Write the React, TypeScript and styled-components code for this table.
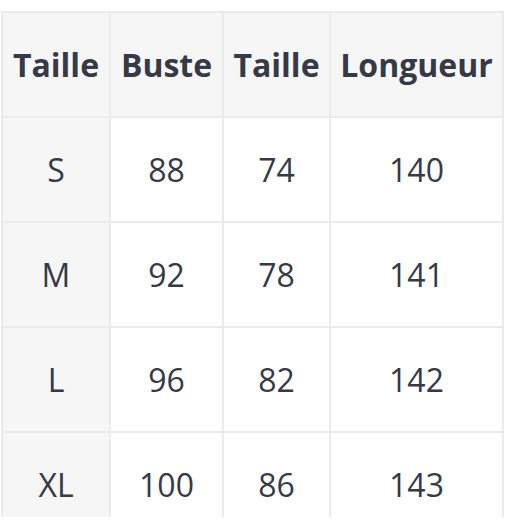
import React, { FC } from "react";
import styled, { createGlobalStyle } from "styled-components";

const GlobalStyle = createGlobalStyle`
  html, body {
    margin: 0;
    padding: 0;
    background: #fff;
  }
  body {
    font-family: "Open Sans", "Liberation Sans", sans-serif;
  }
`;

export const Frame = styled.div`
  padding: 11px 0 0 1px;
  height: 506px;
  overflow: hidden;
`;

export const SizeTable = styled.table`
  border-collapse: separate;
  border-spacing: 0;
  table-layout: fixed;
  width: 503px;
  border-top: 2px solid #ebebeb;
  border-left: 2px solid #ebebeb;
  color: #363a46;
  font-size: 32px;
`;

export const HeadCell = styled.th<{ w: number }>`
  width: ${(p) => p.w}px;
  height: 103px;
  box-sizing: content-box;
  padding: 0;
  background: #f6f6f6;
  border-right: 2px solid #ebebeb;
  border-bottom: 2px solid #ebebeb;
  font-weight: 700;
  text-align: center;
  vertical-align: middle;
  white-space: nowrap;
`;

export const Cell = styled.td<{ shaded?: boolean }>`
  height: 103px;
  padding: 0;
  background: ${(p) => (p.shaded ? "#f6f6f6" : "#fff")};
  border-right: 2px solid #ebebeb;
  border-bottom: 2px solid #ebebeb;
  font-weight: 400;
  text-align: center;
  vertical-align: middle;
`;

interface IRow {
  size: string;
  buste: number;
  taille: number;
  longueur: number;
}

const columns = [
  { title: "Taille", w: 106 },
  { title: "Buste", w: 111 },
  { title: "Taille", w: 105 },
  { title: "Longueur", w: 171 },
];

const rows: IRow[] = [
  { size: "S", buste: 88, taille: 74, longueur: 140 },
  { size: "M", buste: 92, taille: 78, longueur: 141 },
  { size: "L", buste: 96, taille: 82, longueur: 142 },
  { size: "XL", buste: 100, taille: 86, longueur: 143 },
];

const App: FC = () => {
  return (
    <>
      <GlobalStyle />
      <Frame>
        <SizeTable>
          <thead>
            <tr>
              {columns.map((c, i) => (
                <HeadCell key={i} w={c.w}>
                  {c.title}
                </HeadCell>
              ))}
            </tr>
          </thead>
          <tbody>
            {rows.map((r) => (
              <tr key={r.size}>
                <Cell shaded>{r.size}</Cell>
                <Cell>{r.buste}</Cell>
                <Cell>{r.taille}</Cell>
                <Cell>{r.longueur}</Cell>
              </tr>
            ))}
          </tbody>
        </SizeTable>
      </Frame>
    </>
  );
};

export default App;
